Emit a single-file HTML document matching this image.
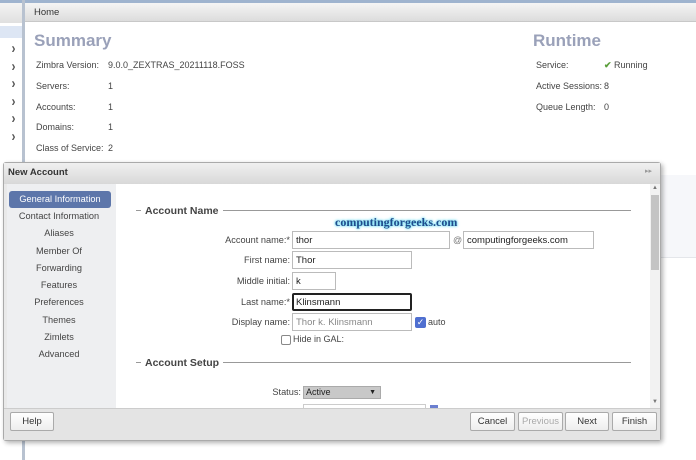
<!DOCTYPE html>
<html><head><meta charset="utf-8"><style>
*{margin:0;padding:0;box-sizing:border-box}
body{width:696px;height:460px;overflow:hidden;background:#fff;font-family:"Liberation Sans",sans-serif;font-size:9px;color:#333;position:relative}
.a{position:absolute;white-space:nowrap}
.inp{position:absolute;border:1px solid #bbb;background:#fff;height:18px;padding:3px 3px;font-size:9.5px;color:#222}
.btn{position:absolute;height:19px;border:1px solid #aaa;border-radius:2px;background:linear-gradient(#fff,#eee);font-size:9.5px;text-align:center;line-height:17px;color:#333}
.nav{position:absolute;left:7px;width:104px;text-align:center;color:#444;font-size:9.2px}
.lab{position:absolute;right:406px;text-align:right;color:#444;font-size:9.2px}
</style></head><body>
<div class="a" style="left:0;top:0;width:696px;height:3px;background:#9fb4cf"></div>
<div class="a" style="left:0;top:3px;width:22px;height:20px;background:linear-gradient(#f4f4f4,#e0e0e0)"></div>
<div class="a" style="left:0;top:26px;width:22px;height:12px;background:#dde6f4"></div>
<div class="a" style="left:22px;top:0;width:3px;height:460px;background:#b8c2d0"></div>
<div class="a" style="left:25px;top:3px;width:671px;height:19px;background:linear-gradient(#f5f5f5,#dcdcdc);border-bottom:1px solid #c8c8c8"></div>
<div class="a" style="left:34px;top:7px;font-size:9.5px;color:#333">Home</div>
<div class="a" style="left:11px;top:40px;color:#555;font-size:15px;font-weight:bold;line-height:17.5px;transform:scaleX(.8)">›<br>›<br>›<br>›<br>›<br>›</div>
<div class="a" style="left:34px;top:31px;font-size:17px;font-weight:bold;color:#9aa1b9">Summary</div>
<div class="a" style="left:36px;top:55px;line-height:20.8px;color:#444">Zimbra Version:<br>Servers:<br>Accounts:<br>Domains:<br>Class of Service:</div>
<div class="a" style="left:108px;top:55px;line-height:20.8px;color:#444">9.0.0_ZEXTRAS_20211118.FOSS<br>1<br>1<br>1<br>2</div>
<div class="a" style="left:533px;top:31px;font-size:17px;font-weight:bold;color:#9aa1b9">Runtime</div>
<div class="a" style="left:536px;top:55px;line-height:20.8px;color:#444">Service:<br>Active Sessions:<br>Queue Length:</div>
<div class="a" style="left:604px;top:55px;line-height:20.8px;color:#444"><span style="color:#5a9e3a;font-weight:bold">✔</span> Running<br>8<br>0</div>
<div class="a" style="left:660px;top:175px;width:36px;height:83px;background:#f6f7fa;border-bottom:1px solid #e4e6ea"></div>

<div class="a" style="left:3px;top:162px;width:658px;height:279px;background:#e9e9e9;border:1px solid #aaa;border-radius:3px;box-shadow:2px 2px 5px rgba(0,0,0,.3)"></div>
<div class="a" style="left:4px;top:163px;width:656px;height:21px;background:linear-gradient(#f0f0f0,#d8d8d8)"></div>
<div class="a" style="left:8px;top:167px;font-weight:bold;font-size:9.5px;color:#333">New Account</div>
<div class="a" style="left:645px;top:167px;font-size:7px;color:#999">▸▸</div>
<div class="a" style="left:7px;top:184px;width:109px;height:224px;background:#eeeff1"></div>
<div class="a" style="left:9px;top:191px;width:102px;height:17px;background:#5d76aa;border-radius:3px"></div>
<div class="nav" style="top:194px;color:#fff;left:8px">General Information</div>
<div class="nav" style="top:211px">Contact Information</div>
<div class="nav" style="top:228px">Aliases</div>
<div class="nav" style="top:246px">Member Of</div>
<div class="nav" style="top:263px">Forwarding</div>
<div class="nav" style="top:280px">Features</div>
<div class="nav" style="top:297px">Preferences</div>
<div class="nav" style="top:315px">Themes</div>
<div class="nav" style="top:332px">Zimlets</div>
<div class="nav" style="top:349px">Advanced</div>
<div class="a" style="left:116px;top:184px;width:534px;height:224px;background:#fff"></div>
<div class="a" style="left:650px;top:184px;width:10px;height:224px;background:#f2f2f2"></div>
<div class="a" style="left:651px;top:195px;width:8px;height:75px;background:#c4c4c4"></div>
<div class="a" style="left:652px;top:185px;font-size:6px;color:#777">▲</div>
<div class="a" style="left:652px;top:399px;font-size:6px;color:#777">▼</div>

<div class="a" style="left:136px;top:210px;width:495px;height:1px;background:#999"></div>
<div class="a" style="left:141px;top:205px;background:#fff;padding:0 4px;font-weight:bold;font-size:10.5px;color:#444">Account Name</div>
<div class="a" style="left:335px;top:215px;font-family:'Liberation Serif',serif;font-weight:bold;font-size:12px;color:#1f4b8c;text-shadow:0 0 3px #5fd8f0,0 0 2px #5fd8f0">computingforgeeks.com</div>
<div class="lab" style="top:235px">Account name:*</div>
<div class="inp" style="left:292px;top:231px;width:158px">thor</div>
<div class="a" style="left:453px;top:235px;color:#777">@</div>
<div class="inp" style="left:463px;top:231px;width:131px">computingforgeeks.com</div>
<div class="lab" style="top:255px">First name:</div>
<div class="inp" style="left:292px;top:251px;width:120px">Thor</div>
<div class="lab" style="top:276px">Middle initial:</div>
<div class="inp" style="left:292px;top:272px;width:44px">k</div>
<div class="lab" style="top:297px">Last name:*</div>
<div class="inp" style="left:292px;top:293px;width:120px;border:2px solid #222;border-radius:2px;padding:2px 2px">Klinsmann</div>
<div class="lab" style="top:317px">Display name:</div>
<div class="inp" style="left:292px;top:313px;width:120px;color:#888">Thor k. Klinsmann</div>
<div class="a" style="left:415px;top:317px;width:11px;height:11px;background:#4f6fd0;border-radius:2px;color:#fff;font-size:9px;line-height:11px;text-align:center">✓</div>
<div class="a" style="left:428px;top:317px;color:#444">auto</div>
<div class="a" style="left:281px;top:335px;width:10px;height:10px;border:1px solid #888;border-radius:2px;background:#fff"></div>
<div class="a" style="left:293px;top:334px;color:#444">Hide in GAL:</div>
<div class="a" style="left:136px;top:362px;width:495px;height:1px;background:#999"></div>
<div class="a" style="left:141px;top:357px;background:#fff;padding:0 4px;font-weight:bold;font-size:10.5px;color:#444">Account Setup</div>
<div class="lab" style="top:387px;right:395px">Status:</div>
<div class="a" style="left:303px;top:386px;width:78px;height:13px;background:#c8c8c8;border:1px solid #aaa;padding-left:2px;line-height:11px;color:#222">Active<span style="position:absolute;right:4px;font-size:7px">▼</span></div>
<div class="a" style="left:303px;top:404px;width:123px;height:5px;border:1px solid #ccc;border-bottom:none"></div>
<div class="a" style="left:430px;top:405px;width:8px;height:3px;background:#6b7fd0"></div>

<div class="a" style="left:4px;top:408px;width:656px;height:32px;background:#e4e4e4;border-top:1px solid #ccc"></div>
<div class="btn" style="left:10px;top:412px;width:44px">Help</div>
<div class="btn" style="left:470px;top:412px;width:45px">Cancel</div>
<div class="btn" style="left:518px;top:412px;width:45px;color:#aaa">Previous</div>
<div class="btn" style="left:565px;top:412px;width:44px">Next</div>
<div class="btn" style="left:612px;top:412px;width:45px">Finish</div>
</body></html>
